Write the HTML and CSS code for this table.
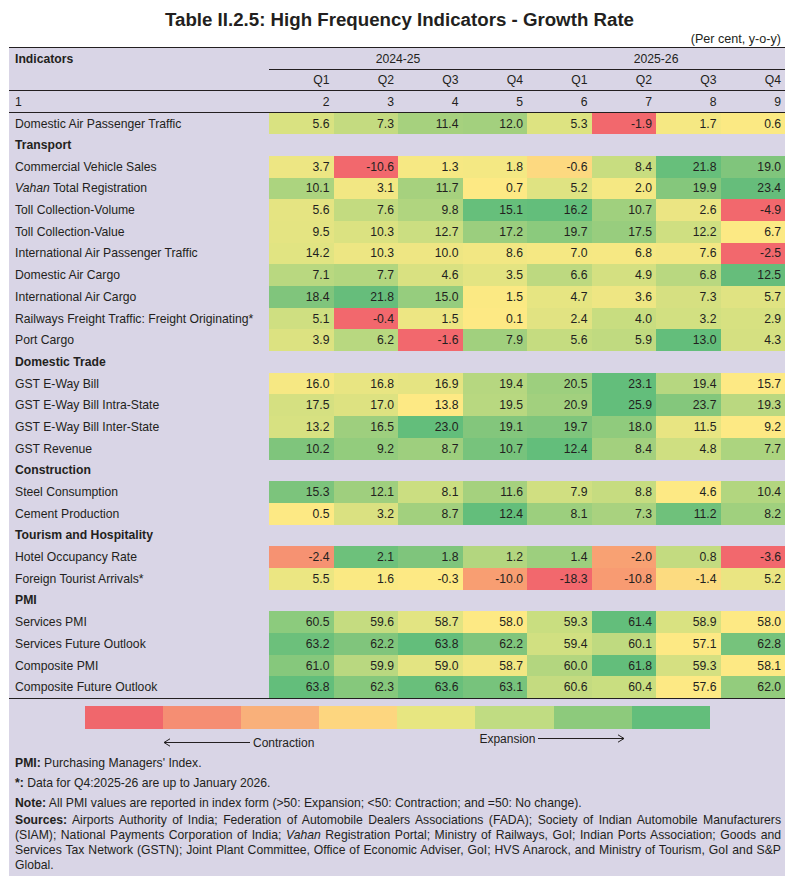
FILE: index.html
```html
<!DOCTYPE html>
<html>
<head>
<meta charset="utf-8">
<link rel="stylesheet" href="styles.css">
</head>
<body>
<div class="page">
  <h1 class="title">Table II.2.5: High Frequency Indicators - Growth Rate</h1>
  <div class="unit">(Per cent, y-o-y)</div>
  <div class="panel">
    <table class="hfi">
      <colgroup>
        <col class="c-lab"><col class="c-q"><col class="c-q"><col class="c-q"><col class="c-q"><col class="c-q"><col class="c-q"><col class="c-q"><col class="c-q">
      </colgroup>
      <thead>
        <tr class="h1">
          <th class="lab b">Indicators</th>
          <th class="yr" colspan="4">2024-25</th>
          <th class="yr" colspan="4">2025-26</th>
        </tr>
        <tr class="h2">
          <th class="lab"></th>
          <th>Q1</th><th>Q2</th><th>Q3</th><th>Q4</th><th>Q1</th><th>Q2</th><th>Q3</th><th>Q4</th>
        </tr>
        <tr class="h3">
          <th class="lab">1</th>
          <th>2</th><th>3</th><th>4</th><th>5</th><th>6</th><th>7</th><th>8</th><th>9</th>
        </tr>
      </thead>
      <tbody>
        <tr><td class="lab">Domestic Air Passenger Traffic</td>
          <td style="background:#d9e281">5.6</td><td style="background:#c4db80">7.3</td><td style="background:#a6d17e">11.4</td><td style="background:#a3d07e">12.0</td><td style="background:#dde381">5.3</td><td style="background:#f2686d">-1.9</td><td style="background:#f5e883">1.7</td><td style="background:#fbe983">0.6</td></tr>
        <tr class="sec"><td class="lab b">Transport</td><td colspan="8"></td></tr>
        <tr><td class="lab">Commercial Vehicle Sales</td>
          <td style="background:#ede683">3.7</td><td style="background:#f2686d">-10.6</td><td style="background:#f6e883">1.3</td><td style="background:#f4e883">1.8</td><td style="background:#fdd980">-0.6</td><td style="background:#c8dd80">8.4</td><td style="background:#67bf7b">21.8</td><td style="background:#80c57c">19.0</td></tr>
        <tr><td class="lab"><i>Vahan</i> Total Registration</td>
          <td style="background:#acd47f">10.1</td><td style="background:#f2e783">3.1</td><td style="background:#a6d17e">11.7</td><td style="background:#fde984">0.7</td><td style="background:#dfe382">5.2</td><td style="background:#f5e883">2.0</td><td style="background:#85c77c">19.9</td><td style="background:#66bd7b">23.4</td></tr>
        <tr><td class="lab">Toll Collection-Volume</td>
          <td style="background:#e5e482">5.6</td><td style="background:#c3db80">7.6</td><td style="background:#b0d57f">9.8</td><td style="background:#66bf7b">15.1</td><td style="background:#63be7b">16.2</td><td style="background:#a0d07e">10.7</td><td style="background:#ebe583">2.6</td><td style="background:#f2686d">-4.9</td></tr>
        <tr><td class="lab">Toll Collection-Value</td>
          <td style="background:#e4e482">9.5</td><td style="background:#dbe281">10.3</td><td style="background:#cbde81">12.7</td><td style="background:#9bce7e">17.2</td><td style="background:#8bca7d">19.7</td><td style="background:#98cd7e">17.5</td><td style="background:#cfdf81">12.2</td><td style="background:#fce984">6.7</td></tr>
        <tr><td class="lab">International Air Passenger Traffic</td>
          <td style="background:#e1e482">14.2</td><td style="background:#ede683">10.3</td><td style="background:#eee683">10.0</td><td style="background:#f2e783">8.6</td><td style="background:#f5e883">7.0</td><td style="background:#f6e883">6.8</td><td style="background:#f3e783">7.6</td><td style="background:#f2686d">-2.5</td></tr>
        <tr><td class="lab">Domestic Air Cargo</td>
          <td style="background:#b9d880">7.1</td><td style="background:#b2d67f">7.7</td><td style="background:#d9e181">4.6</td><td style="background:#e3e482">3.5</td><td style="background:#bdd980">6.6</td><td style="background:#d4e081">4.9</td><td style="background:#b9d880">6.8</td><td style="background:#66bd7b">12.5</td></tr>
        <tr><td class="lab">International Air Cargo</td>
          <td style="background:#80c57c">18.4</td><td style="background:#66bd7b">21.8</td><td style="background:#96cd7e">15.0</td><td style="background:#fbe983">1.5</td><td style="background:#e6e582">4.7</td><td style="background:#eee683">3.6</td><td style="background:#d6e081">7.3</td><td style="background:#e0e382">5.7</td></tr>
        <tr><td class="lab">Railways Freight Traffic: Freight Originating*</td>
          <td style="background:#cfdf81">5.1</td><td style="background:#f2686d">-0.4</td><td style="background:#ede683">1.5</td><td style="background:#fde984">0.1</td><td style="background:#e1e382">2.4</td><td style="background:#c8dd80">4.0</td><td style="background:#d2e081">3.2</td><td style="background:#d7e181">2.9</td></tr>
        <tr><td class="lab">Port Cargo</td>
          <td style="background:#dce281">3.9</td><td style="background:#b8d880">6.2</td><td style="background:#f2686d">-1.6</td><td style="background:#a1d07e">7.9</td><td style="background:#c5dc80">5.6</td><td style="background:#c0da80">5.9</td><td style="background:#63be7b">13.0</td><td style="background:#d5e081">4.3</td></tr>
        <tr class="sec"><td class="lab b">Domestic Trade</td><td colspan="8"></td></tr>
        <tr><td class="lab">GST E-Way Bill</td>
          <td style="background:#f6e883">16.0</td><td style="background:#e8e582">16.8</td><td style="background:#e5e482">16.9</td><td style="background:#b6d780">19.4</td><td style="background:#9dcf7e">20.5</td><td style="background:#63be7b">23.1</td><td style="background:#b6d780">19.4</td><td style="background:#fde984">15.7</td></tr>
        <tr><td class="lab">GST E-Way Bill Intra-State</td>
          <td style="background:#d5e081">17.5</td><td style="background:#dde281">17.0</td><td style="background:#fde984">13.8</td><td style="background:#b8d880">19.5</td><td style="background:#a2d07e">20.9</td><td style="background:#63be7b">25.9</td><td style="background:#84c77c">23.7</td><td style="background:#bad880">19.3</td></tr>
        <tr><td class="lab">GST E-Way Bill Inter-State</td>
          <td style="background:#d7e181">13.2</td><td style="background:#9ecf7e">16.5</td><td style="background:#63be7b">23.0</td><td style="background:#83c67c">19.1</td><td style="background:#7fc57c">19.7</td><td style="background:#90cb7d">18.0</td><td style="background:#e8e582">11.5</td><td style="background:#fde984">9.2</td></tr>
        <tr><td class="lab">GST Revenue</td>
          <td style="background:#7fc57c">10.2</td><td style="background:#93cc7d">9.2</td><td style="background:#9ecf7e">8.7</td><td style="background:#77c37c">10.7</td><td style="background:#63be7b">12.4</td><td style="background:#a3d07e">8.4</td><td style="background:#cfdf81">4.8</td><td style="background:#acd47f">7.7</td></tr>
        <tr class="sec"><td class="lab b">Construction</td><td colspan="8"></td></tr>
        <tr><td class="lab">Steel Consumption</td>
          <td style="background:#7cc47c">15.3</td><td style="background:#9fcf7e">12.1</td><td style="background:#cbde81">8.1</td><td style="background:#a5d17e">11.6</td><td style="background:#d0df81">7.9</td><td style="background:#c6dc80">8.8</td><td style="background:#fde984">4.6</td><td style="background:#b2d67f">10.4</td></tr>
        <tr><td class="lab">Cement Production</td>
          <td style="background:#fde984">0.5</td><td style="background:#dae181">3.2</td><td style="background:#a2d07e">8.7</td><td style="background:#63be7b">12.4</td><td style="background:#9ccf7e">8.1</td><td style="background:#a9d27f">7.3</td><td style="background:#6fc17b">11.2</td><td style="background:#a0d07e">8.2</td></tr>
        <tr class="sec"><td class="lab b">Tourism and Hospitality</td><td colspan="8"></td></tr>
        <tr><td class="lab">Hotel Occupancy Rate</td>
          <td style="background:#f69272">-2.4</td><td style="background:#6dc17b">2.1</td><td style="background:#7fc57c">1.8</td><td style="background:#b3d67f">1.2</td><td style="background:#9dcf7e">1.4</td><td style="background:#f8a173">-2.0</td><td style="background:#c3db80">0.8</td><td style="background:#f2686d">-3.6</td></tr>
        <tr><td class="lab">Foreign Tourist Arrivals*</td>
          <td style="background:#ebe682">5.5</td><td style="background:#fae983">1.6</td><td style="background:#fde984">-0.3</td><td style="background:#f89e72">-10.0</td><td style="background:#f2686d">-18.3</td><td style="background:#f89b72">-10.8</td><td style="background:#fcdb80">-1.4</td><td style="background:#eae582">5.2</td></tr>
        <tr class="sec"><td class="lab b">PMI</td><td colspan="8"></td></tr>
        <tr><td class="lab">Services PMI</td>
          <td style="background:#8ccb7d">60.5</td><td style="background:#c5dc80">59.6</td><td style="background:#e2e482">58.7</td><td style="background:#fde984">58.0</td><td style="background:#c9de80">59.3</td><td style="background:#63be7b">61.4</td><td style="background:#d9e281">58.9</td><td style="background:#fde984">58.0</td></tr>
        <tr><td class="lab">Services Future Outlook</td>
          <td style="background:#6cc07b">63.2</td><td style="background:#80c57c">62.2</td><td style="background:#63be7b">63.8</td><td style="background:#80c57c">62.2</td><td style="background:#d1e081">59.4</td><td style="background:#bfda80">60.1</td><td style="background:#fde984">57.1</td><td style="background:#76c37c">62.8</td></tr>
        <tr><td class="lab">Composite PMI</td>
          <td style="background:#86c87c">61.0</td><td style="background:#b9d880">59.9</td><td style="background:#e3e482">59.0</td><td style="background:#f2e783">58.7</td><td style="background:#b3d67f">60.0</td><td style="background:#63be7b">61.8</td><td style="background:#d5e081">59.3</td><td style="background:#fde984">58.1</td></tr>
        <tr><td class="lab">Composite Future Outlook</td>
          <td style="background:#63be7b">63.8</td><td style="background:#86c87c">62.3</td><td style="background:#69bf7b">63.6</td><td style="background:#77c37c">63.1</td><td style="background:#c4db80">60.6</td><td style="background:#c9de80">60.4</td><td style="background:#fde984">57.6</td><td style="background:#93cc7d">62.0</td></tr>
      </tbody>
    </table>

    <div class="legend">
      <span class="sw s1"></span><span class="sw s2"></span><span class="sw s3"></span><span class="sw s4"></span><span class="sw s5"></span><span class="sw s6"></span><span class="sw s7"></span><span class="sw s8"></span>
    </div>
    <div class="arrows">
      <div class="dir contraction">
        <svg class="arr" width="87" height="9" viewBox="0 0 87 9"><path d="M1 4.5H87M7 0.8L1 4.5L7 8.2" fill="none" stroke="#231f20" stroke-width="1"/></svg>
        <span>Contraction</span>
      </div>
      <div class="dir expansion">
        <span>Expansion</span>
        <svg class="arr" width="87" height="9" viewBox="0 0 87 9"><path d="M0 4.5H86M80 0.8L86 4.5L80 8.2" fill="none" stroke="#231f20" stroke-width="1"/></svg>
      </div>
    </div>

    <div class="notes">
      <p class="gap"><b>PMI:</b> Purchasing Managers' Index.</p>
      <p class="gap"><b>*:</b> Data for Q4:2025-26 are up to January 2026.</p>
      <p class="tight"><b>Note:</b> All PMI values are reported in index form (&gt;50: Expansion; &lt;50: Contraction; and =50: No change).</p>
      <p class="src"><b>Sources:</b> Airports Authority of India; Federation of Automobile Dealers Associations (FADA); Society of Indian Automobile Manufacturers (SIAM); National Payments Corporation of India; <i>Vahan</i> Registration Portal; Ministry of Railways, GoI; Indian Ports Association; Goods and Services Tax Network (GSTN); Joint Plant Committee, Office of Economic Adviser, GoI; HVS Anarock, and Ministry of Tourism, GoI and S&amp;P Global.</p>
    </div>
  </div>
</div>
</body>
</html>
```

FILE: styles.css
```css
* { box-sizing: border-box; }
html, body { margin: 0; padding: 0; background: #ffffff; }
body {
  font-family: "Liberation Sans", Arial, sans-serif;
  color: #231f20;
}
.page { width: 793px; padding-top: 9px; }
.title {
  margin: 0;
  font-size: 18.7px;
  line-height: 22px;
  font-weight: bold;
  text-align: center;
  padding-left: 6px;
}
.unit {
  font-size: 12.6px;
  line-height: 16px;
  text-align: right;
  padding-right: 12px;
}
.panel {
  margin-left: 9px;
  width: 776px;
  background: #d9d5e6;
  padding-bottom: 3px;
}
.hfi {
  width: 776px;
  border-collapse: collapse;
  table-layout: fixed;
  font-size: 12.2px;
  border-top: 1px solid #231f20;
  border-bottom: 1px solid #231f20;
}
.c-lab { width: 260px; }
.c-q { width: 64.5px; }
.hfi th, .hfi td {
  padding: 0 4px 0 0;
  text-align: right;
  font-weight: normal;
  white-space: nowrap;
  vertical-align: middle;
}
.hfi .lab { text-align: left; padding-left: 6px; }
.hfi .b { font-weight: bold; }
.hfi .yr { text-align: center; border-bottom: 1px solid #231f20; padding: 0; }
.h1 th { height: 22px; }
.h2 th { height: 21px; }
.h2 { border-bottom: 1px solid #231f20; }
.h3 th { height: 22px; }
.h3 { border-bottom: 1px solid #231f20; }
.hfi tbody td { height: 21.7px; line-height: 14px; }

.legend {
  display: flex;
  margin: 7px 0 0 76px;
}
.sw { width: 78.1px; height: 23px; }
.s1 { background: #f0676c; }
.s2 { background: #f58e73; }
.s3 { background: #f9b07a; }
.s4 { background: #fdd67f; }
.s5 { background: #e7e681; }
.s6 { background: #c0dc82; }
.s7 { background: #8dca7c; }
.s8 { background: #63be7b; }

.arrows {
  display: flex;
  align-items: flex-start;
  height: 27px;
  font-size: 12px;
}
.dir { display: flex; align-items: center; gap: 3px; }
.contraction { margin-left: 154px; margin-top: 7px; }
.expansion { margin-left: 165px; margin-top: 3px; }
.arr { display: block; }

.notes {
  padding: 0 4px 0 6px;
  font-size: 12.2px;
  line-height: 15px;
}
.notes p { margin: 0; }
.notes .gap { margin-bottom: 5px; }
.notes .tight { margin-bottom: 2px; }
.notes .src { text-align: justify; }
```
